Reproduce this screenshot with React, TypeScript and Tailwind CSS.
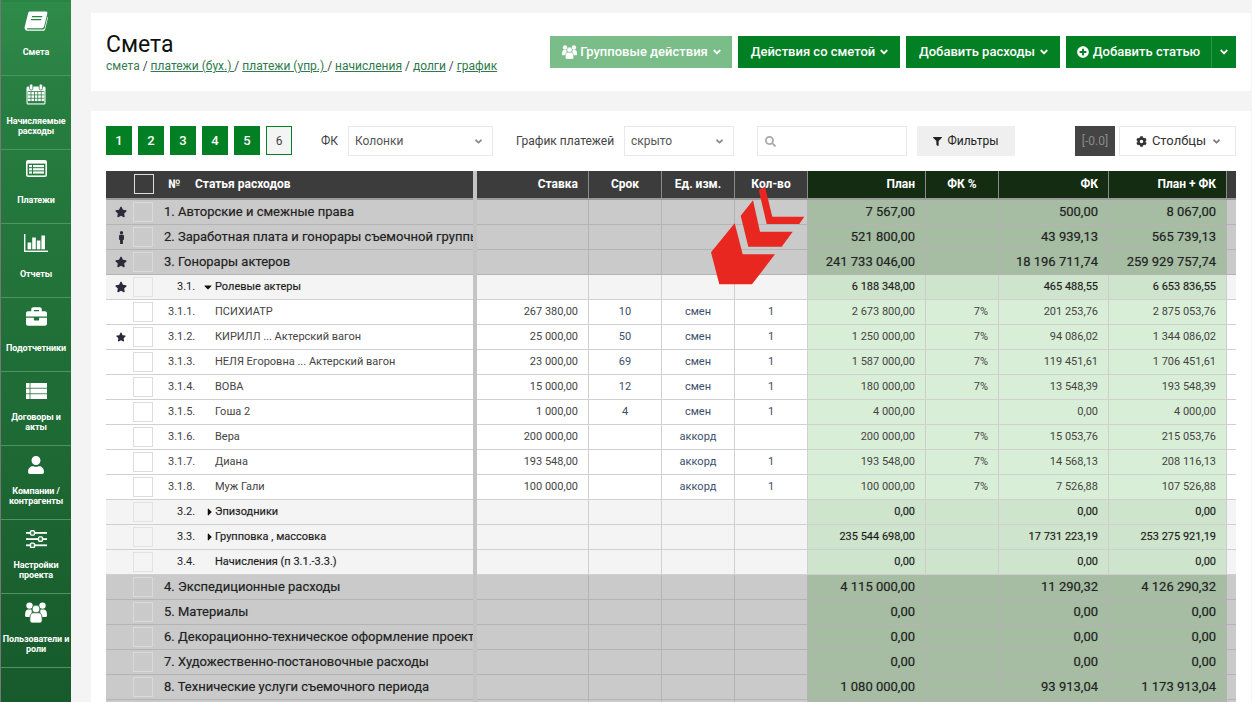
import React from "react";
import { FaBriefcase, FaUser, FaStar, FaMale, FaAngleDown, FaPlusCircle, FaFilter, FaCog, FaSearch, FaCaretDown, FaCaretRight } from "react-icons/fa";

const GRID = "grid grid-cols-[367px_4px_112px_73px_73px_73px_118px_73px_110px_118px_9px]";

function BookIcon() {
  return (
    <svg width="24" height="20" viewBox="0 0 24 20" fill="white">
      <path d="M6 0.5 H22 C23.2 0.5 23.6 1.3 23.3 2.4 L20 15.8 C19.7 16.8 19 17.2 18 17.2 H4 C3 17.2 2.6 17.8 3 18.2 C3.3 18.5 3.8 18.5 4.4 18.5 H19 C19.8 18.5 20.4 18.1 20.7 17.3 L23.4 6 L24 6.5 L21.2 18.2 C21 19.2 20 19.8 19 19.8 H4 C1.8 19.8 0 18 0.8 15.4 L4.2 2 C4.5 1 5.1 0.5 6 0.5 Z" />
      <path d="M8.2 5 H18.4 L18 6.3 H7.8 Z M7.2 8 H17.4 L17 9.3 H6.8 Z" fill="#2a8043" />
    </svg>
  );
}

function CalendarIcon() {
  const cols = [2, 5.4, 8.8, 12.2, 15.6];
  const rws = [8, 11.3, 14.6];
  return (
    <svg width="20" height="21" viewBox="0 0 20 21">
      <rect x="0.5" y="2.5" width="19" height="18" rx="1.5" fill="white" />
      <rect x="3.6" y="0" width="3.2" height="6" rx="1.4" fill="white" stroke="#2a7f42" strokeWidth="0.8" />
      <rect x="13.2" y="0" width="3.2" height="6" rx="1.4" fill="white" stroke="#2a7f42" strokeWidth="0.8" />
      <rect x="1.6" y="7.2" width="16.8" height="12.2" fill="#2a7f42" />
      {rws.map((y) => cols.map((x) => <rect key={`${x}-${y}`} x={x} y={y} width="2.6" height="2.5" fill="white" />))}
    </svg>
  );
}

function ListAltIcon() {
  return (
    <svg width="21" height="17" viewBox="0 0 21 17">
      <rect x="0" y="0" width="21" height="17" rx="2.2" fill="white" />
      <rect x="1.6" y="3.6" width="17.8" height="11.8" fill="#227a3b" />
      <g fill="white">
        <rect x="3" y="5" width="3" height="2.2" />
        <rect x="7" y="5" width="11" height="2.2" />
        <rect x="3" y="8.2" width="3" height="2.2" />
        <rect x="7" y="8.2" width="11" height="2.2" />
        <rect x="3" y="11.4" width="3" height="2.2" />
        <rect x="7" y="11.4" width="11" height="2.2" />
      </g>
    </svg>
  );
}

function BarsIcon() {
  return (
    <svg width="24" height="18" viewBox="0 0 24 18" fill="white">
      <rect x="0" y="0" width="1.4" height="18" />
      <rect x="0" y="16.6" width="24" height="1.4" />
      <rect x="3.6" y="8.5" width="3.6" height="6.8" />
      <rect x="8.2" y="3.5" width="3.6" height="11.8" />
      <rect x="12.8" y="6.5" width="3.6" height="8.8" />
      <rect x="17.4" y="1.5" width="3.6" height="13.8" />
    </svg>
  );
}

function ListIcon() {
  return (
    <svg width="21" height="16" viewBox="0 0 21 16" fill="white">
      {[0, 5.6, 11.2].map((y) => (
        <g key={y}>
          <rect x="0" y={y} width="3.6" height="4.8" />
          <rect x="4.4" y={y} width="16.6" height="4.8" />
        </g>
      ))}
    </svg>
  );
}

function SlidersIcon() {
  return (
    <svg width="21" height="18" viewBox="0 0 21 18">
      <g fill="white">
        <rect x="0" y="2" width="21" height="1.8" />
        <rect x="0" y="8.2" width="21" height="1.8" />
        <rect x="0" y="14.4" width="21" height="1.8" />
      </g>
      <g fill="#227a3b" stroke="white" strokeWidth="1.4">
        <rect x="4.5" y="0.7" width="4" height="4.4" rx="1" />
        <rect x="12.5" y="6.9" width="4" height="4.4" rx="1" />
        <rect x="4.5" y="13.1" width="4" height="4.4" rx="1" />
      </g>
    </svg>
  );
}

function UsersIcon({ size = 22, cut = "#1b6531" }: { size?: number; cut?: string }) {
  return (
    <svg width={size} height={(size * 21) / 22} viewBox="0 0 22 21" fill="white">
      <circle cx="4.5" cy="3.6" r="3.2" />
      <circle cx="17.5" cy="3.6" r="3.2" />
      <path d="M0 13.5 C0 9.5 1 7.5 3 7.5 H6.5 C7 10 7 12 5 15 H1.5 C0.6 15 0 14.4 0 13.5 Z" />
      <path d="M22 13.5 C22 9.5 21 7.5 19 7.5 H15.5 C15 10 15 12 17 15 H20.5 C21.4 15 22 14.4 22 13.5 Z" />
      <circle cx="11" cy="7" r="3.9" stroke={cut} strokeWidth="0.8" />
      <path d="M4.8 18 C4.8 13.5 6 10.8 8.2 10.8 H13.8 C16 10.8 17.2 13.5 17.2 18 C17.2 19.8 16.2 21 14.6 21 H7.4 C5.8 21 4.8 19.8 4.8 18 Z" stroke={cut} strokeWidth="0.8" />
    </svg>
  );
}

const navItems: { icon: React.ReactNode; label: string[]; active?: boolean }[] = [
  { icon: <BookIcon />, label: ["Смета"], active: true },
  { icon: <CalendarIcon />, label: ["Начисляемые", "расходы"] },
  { icon: <ListAltIcon />, label: ["Платежи"] },
  { icon: <BarsIcon />, label: ["Отчеты"] },
  { icon: <FaBriefcase className="text-[21px]" />, label: ["Подотчетники"] },
  { icon: <ListIcon />, label: ["Договоры и", "акты"] },
  { icon: <FaUser className="text-[18px]" />, label: ["Компании /", "контрагенты"] },
  { icon: <SlidersIcon />, label: ["Настройки", "проекта"] },
  { icon: <UsersIcon />, label: ["Пользователи и", "роли"] },
];

function Sidebar() {
  return (
    <aside className="w-[71px] h-[702px] shrink-0 pt-[2px] border-l border-l-[#777] bg-gradient-to-b from-[#2a8444] to-[#175a2b] flex flex-col">
      {navItems.map((n, i) => (
        <div
          key={i}
          className={`h-[74px] shrink-0 border-b border-[#4c9562] flex flex-col items-center text-white ${n.active ? "bg-gradient-to-b from-[#2f8b49] to-[#2a8245]" : ""}`}
        >
          <div className="h-[35px] shrink-0 pt-[2px] flex items-center justify-center">{n.icon}</div>
          <div className="h-[30px] flex flex-col justify-center items-center text-[9px] leading-[10px] font-bold tracking-[-0.1px] whitespace-nowrap">
            {n.label.map((l) => (
              <span key={l}>{l}</span>
            ))}
          </div>
        </div>
      ))}
    </aside>
  );
}

function GreenBtn({ children, light, className = "" }: { children: React.ReactNode; light?: boolean; className?: string }) {
  return (
    <div
      className={`h-[32px] flex items-center justify-center gap-[3px] text-white text-[13px] font-medium ${light ? "bg-[#7abd88]" : "bg-[#037f24]"} ${className}`}
    >
      {children}
    </div>
  );
}

function HeaderPanel() {
  return (
    <section className="h-[78px] shrink-0 bg-white flex justify-between pl-[15px] pr-[15px] pt-[23px]">
      <div className="-mt-[4px]">
        <div className="text-[23px] leading-[26px] text-[#111]">Смета</div>
        <div className="text-[12px] leading-[17px] text-[#444] whitespace-nowrap">
          <span className="text-[#3b7a58]">смета</span> / <span className="underline text-[#2f7a4c]">платежи (бух.) </span>/{" "}
          <span className="underline text-[#2f7a4c]">платежи (упр.) </span>/ <span className="underline text-[#2f7a4c]">начисления</span> /{" "}
          <span className="underline text-[#2f7a4c]">долги</span> / <span className="underline text-[#2f7a4c]">график</span>
        </div>
      </div>
      <div className="flex gap-[6px]">
        <GreenBtn light className="w-[182px] pl-[3px]">
          <UsersIcon size={15} cut="#7abd88" /> Групповые действия <FaAngleDown className="text-[12px]" />
        </GreenBtn>
        <GreenBtn className="w-[162px] pl-[3px]">
          Действия со сметой <FaAngleDown className="text-[12px]" />
        </GreenBtn>
        <GreenBtn className="w-[154px] pl-[3px]">
          Добавить расходы <FaAngleDown className="text-[12px]" />
        </GreenBtn>
        <div className="flex w-[170px]">
          <GreenBtn className="w-[146px] gap-[4px] border-r border-[#2f9449]">
            <FaPlusCircle className="text-[12px]" /> Добавить статью
          </GreenBtn>
          <GreenBtn className="w-[24px]">
            <FaAngleDown className="text-[12px]" />
          </GreenBtn>
        </div>
      </div>
    </section>
  );
}

function Select({ value, className }: { value: string; className: string }) {
  return (
    <div className={`h-[30px] border border-[#e8e8e8] flex items-center justify-between pl-[6px] pr-[8px] text-[12px] text-[#555] ${className}`}>
      <span>{value}</span>
      <FaAngleDown className="text-[11px] text-[#888]" />
    </div>
  );
}

function Toolbar() {
  return (
    <div className="h-[30px] flex items-start text-[12px] text-[#444]">
      <div className="flex gap-[6px]">
        {["1", "2", "3", "4", "5"].map((n) => (
          <div key={n} className="w-[26px] h-[29px] bg-[#037f24] text-white flex items-center justify-center text-[13px] font-medium">
            {n}
          </div>
        ))}
        <div className="w-[26px] h-[29px] bg-[#f4f4f4] border border-[#037f24] flex items-center justify-center text-[12px]">6</div>
      </div>
      <span className="ml-[29px] w-[27px] leading-[30px]">ФК</span>
      <Select value="Колонки" className="w-[145px]" />
      <span className="ml-[23px] w-[108px] leading-[30px] whitespace-nowrap">График платежей</span>
      <Select value="скрыто" className="w-[110px]" />
      <div className="ml-[23px] w-[150px] h-[30px] border border-[#e8e8e8] flex items-center pl-[7px]">
        <FaSearch className="text-[11px] text-[#aaa]" />
      </div>
      <div className="ml-[10px] w-[98px] h-[30px] bg-[#efefef] flex items-center justify-center gap-[5px] text-[#222] text-[12px]">
        <FaFilter className="text-[9px]" /> Фильтры
      </div>
      <div className="ml-[60px] w-[40px] h-[30px] bg-[#444] text-[#8a8a8a] flex items-center justify-center text-[12px]">[-0.0]</div>
      <div className="ml-[4px] w-[117px] h-[30px] border border-[#e8e8e8] pl-[3px] flex items-center justify-center gap-[5px] text-[#333] text-[13px]">
        <FaCog className="text-[11px]" /> Столбцы <FaAngleDown className="text-[11px] text-[#777]" />
      </div>
    </div>
  );
}

function HeaderRow() {
  const hc = "border-r border-[#8a8a8a] flex items-center px-[10px] pb-[1px] text-[12px] font-bold text-white whitespace-nowrap";
  return (
    <div className={`${GRID} h-[29px] bg-[#3c3c3c] border-b-[2px] border-[#9a9a9a]`}>
      <div className="flex items-center pb-[1px] text-[12px] font-bold text-white">
        <div className="w-[28px]" />
        <div className="w-[20px] h-[20px] border border-[#ddd]" />
        <span className="ml-[14px] w-[27px]">№</span>
        <span>Статья расходов</span>
      </div>
      <div className="bg-[#c4c4c4] -mb-[2px]" />
      <div className={`${hc} justify-end`}>Ставка</div>
      <div className={`${hc} justify-center`}>Срок</div>
      <div className={`${hc} justify-center`}>Ед. изм.</div>
      <div className={`${hc} justify-center`}>Кол-во</div>
      <div className={`${hc} justify-end bg-[#142c12]`}>План</div>
      <div className={`${hc} justify-center bg-[#142c12]`}>ФК %</div>
      <div className={`${hc} justify-end bg-[#142c12]`}>ФК</div>
      <div className={`${hc} justify-end bg-[#142c12]`}>План + ФК</div>
      <div />
    </div>
  );
}

type Kind = "group" | "sub" | "item";
type RowData = {
  kind: Kind;
  title: string;
  num?: string;
  mark?: "star" | "male";
  caret?: "down" | "right";
  rate?: string;
  term?: string;
  unit?: string;
  qty?: string;
  plan: string;
  pct?: string;
  fk: string;
  total: string;
};

const rows: RowData[] = [
  { kind: "group", title: "1. Авторские и смежные права", mark: "star", plan: "7 567,00", fk: "500,00", total: "8 067,00" },
  { kind: "group", title: "2. Заработная плата и гонорары съемочной группы", mark: "male", plan: "521 800,00", fk: "43 939,13", total: "565 739,13" },
  { kind: "group", title: "3. Гонорары актеров", mark: "star", plan: "241 733 046,00", fk: "18 196 711,74", total: "259 929 757,74" },
  { kind: "sub", num: "3.1.", caret: "down", title: "Ролевые актеры", mark: "star", plan: "6 188 348,00", fk: "465 488,55", total: "6 653 836,55" },
  { kind: "item", num: "3.1.1.", title: "ПСИХИАТР", rate: "267 380,00", term: "10", unit: "смен", qty: "1", plan: "2 673 800,00", pct: "7%", fk: "201 253,76", total: "2 875 053,76" },
  { kind: "item", num: "3.1.2.", title: "КИРИЛЛ ... Актерский вагон", mark: "star", rate: "25 000,00", term: "50", unit: "смен", qty: "1", plan: "1 250 000,00", pct: "7%", fk: "94 086,02", total: "1 344 086,02" },
  { kind: "item", num: "3.1.3.", title: "НЕЛЯ Егоровна ... Актерский вагон", rate: "23 000,00", term: "69", unit: "смен", qty: "1", plan: "1 587 000,00", pct: "7%", fk: "119 451,61", total: "1 706 451,61" },
  { kind: "item", num: "3.1.4.", title: "ВОВА", rate: "15 000,00", term: "12", unit: "смен", qty: "1", plan: "180 000,00", pct: "7%", fk: "13 548,39", total: "193 548,39" },
  { kind: "item", num: "3.1.5.", title: "Гоша 2", rate: "1 000,00", term: "4", unit: "смен", qty: "1", plan: "4 000,00", fk: "0,00", total: "4 000,00" },
  { kind: "item", num: "3.1.6.", title: "Вера", rate: "200 000,00", unit: "аккорд", plan: "200 000,00", pct: "7%", fk: "15 053,76", total: "215 053,76" },
  { kind: "item", num: "3.1.7.", title: "Диана", rate: "193 548,00", unit: "аккорд", qty: "1", plan: "193 548,00", pct: "7%", fk: "14 568,13", total: "208 116,13" },
  { kind: "item", num: "3.1.8.", title: "Муж Гали", rate: "100 000,00", unit: "аккорд", qty: "1", plan: "100 000,00", pct: "7%", fk: "7 526,88", total: "107 526,88" },
  { kind: "sub", num: "3.2.", caret: "right", title: "Эпизодники", plan: "0,00", fk: "0,00", total: "0,00" },
  { kind: "sub", num: "3.3.", caret: "right", title: "Групповка , массовка", plan: "235 544 698,00", fk: "17 731 223,19", total: "253 275 921,19" },
  { kind: "sub", num: "3.4.", title: "Начисления (п 3.1.-3.3.)", plan: "0,00", fk: "0,00", total: "0,00" },
  { kind: "group", title: "4. Экспедиционные расходы", plan: "4 115 000,00", fk: "11 290,32", total: "4 126 290,32" },
  { kind: "group", title: "5. Материалы", plan: "0,00", fk: "0,00", total: "0,00" },
  { kind: "group", title: "6. Декорационно-техническое оформление проекта", plan: "0,00", fk: "0,00", total: "0,00" },
  { kind: "group", title: "7. Художественно-постановочные расходы", plan: "0,00", fk: "0,00", total: "0,00" },
  { kind: "group", title: "8. Технические услуги съемочного периода", plan: "1 080 000,00", fk: "93 913,04", total: "1 173 913,04" },
  { kind: "group", title: "", plan: "", fk: "", total: "" },
];

const styles: Record<Kind, { row: string; green: string; border: string; greenBorder: string; text: string; check: string }> = {
  group: {
    row: "bg-[#cacaca]",
    green: "bg-[#a6bda4]",
    border: "border-[#b4b4b4]",
    greenBorder: "border-[#b4b4b4]",
    text: "text-[13px] text-[#222] [text-shadow:0_0_1px_rgba(0,0,0,0.3)]",
    check: "border-[#dadada]",
  },
  sub: {
    row: "bg-[#f4f4f4]",
    green: "bg-[#cfe4cc]",
    border: "border-[#d0d0d0]",
    greenBorder: "border-[#cdcdcd]",
    text: "text-[11px] text-[#1c1c1c] [text-shadow:0_0_1px_rgba(0,0,0,0.3)]",
    check: "border-[#e2e2e2]",
  },
  item: {
    row: "bg-white",
    green: "bg-[#d9eed6]",
    border: "border-[#d0d0d0]",
    greenBorder: "border-[#cdcdcd]",
    text: "text-[11px] text-[#444]",
    check: "border-[#dcdcdc]",
  },
};

function Row({ r }: { r: RowData }) {
  const s = styles[r.kind];
  const cell = `border-r ${s.border} flex items-center h-full px-[10px] whitespace-nowrap`;
  const gcell = `border-r ${s.greenBorder} ${s.green} flex items-center h-full px-[10px] whitespace-nowrap`;
  const info = "text-[11px] text-[#3a4f6b]";
  return (
    <div className={`${GRID} h-[25px] border-b ${s.border} ${s.row} items-stretch`}>
      <div className="flex items-center overflow-hidden">
        <div className="w-[27px] shrink-0 flex justify-center pl-[3px] text-[#2a2a3a]">
          {r.mark === "star" && <FaStar className={r.kind === "item" ? "text-[10px]" : "text-[12px]"} />}
          {r.mark === "male" && <FaMale className="text-[13px]" />}
        </div>
        <div className={`w-[20px] h-[20px] shrink-0 border ${s.check}`} />
        {r.kind === "group" ? (
          <span className={`ml-[11px] ${s.text} whitespace-nowrap`}>{r.title}</span>
        ) : (
          <>
            <span className={`${r.kind === "sub" ? "ml-[24px] w-[25px] text-[#1c1c1c]" : "ml-[15px] w-[34px] text-[#444]"} text-[11px] shrink-0 whitespace-nowrap`}>
              {r.num}
            </span>
            <span className={`w-[13px] shrink-0 flex text-[#111] text-[12px] ${r.caret === "right" ? "pl-[3px]" : ""}`}>
              {r.caret === "down" && <FaCaretDown />}
              {r.caret === "right" && <FaCaretRight />}
            </span>
            <span className={`${s.text} whitespace-nowrap`}>{r.title}</span>
          </>
        )}
      </div>
      <div className="bg-[#c4c4c4] -mb-[1px]" />
      <div className={`${cell} justify-end text-[11px] text-[#444]`}>{r.rate}</div>
      <div className={`${cell} justify-center ${info}`}>{r.term}</div>
      <div className={`${cell} justify-center ${info}`}>{r.unit}</div>
      <div className={`${cell} justify-center ${info}`}>{r.qty}</div>
      <div className={`${gcell} justify-end ${s.text}`}>{r.plan}</div>
      <div className={`${gcell} justify-end text-[11px] text-[#444]`}>{r.pct}</div>
      <div className={`${gcell} justify-end ${s.text}`}>{r.fk}</div>
      <div className={`${gcell} justify-end ${s.text}`}>{r.total}</div>
      <div />
    </div>
  );
}

function Arrow() {
  return (
    <svg className="absolute left-0 top-0 pointer-events-none" width="1252" height="702" viewBox="0 0 1252 702" fill="#e82720">
      <polygon points="758.7,190 765,186.7 772.3,216.7 804.3,216.7 799.3,224 766.7,224" />
      <polygon points="740.7,215.7 753,200.3 760,231.7 792.7,231.7 781.7,246.7 748.3,246.7" />
      <polygon points="711,252.3 734.7,223.3 742.7,254.3 775,254.3 752,284.3 719.3,284.3" />
    </svg>
  );
}

export default function App() {
  return (
    <div className="relative w-[1252px] h-[702px] overflow-hidden flex bg-[#f4f4f4] font-['Roboto',sans-serif]">
      <Sidebar />
      <main className="flex-1 min-w-0 pl-[20px] pr-[1px] pt-[13px] flex flex-col">
        <HeaderPanel />
        <section className="mt-[20px] flex-1 min-h-0 bg-white pl-[15px] pr-[15px] pt-[15px]">
          <Toolbar />
          <div className="mt-[15px]">
            <HeaderRow />
            {rows.map((r, i) => (
              <Row key={i} r={r} />
            ))}
          </div>
        </section>
      </main>
      <Arrow />
    </div>
  );
}
